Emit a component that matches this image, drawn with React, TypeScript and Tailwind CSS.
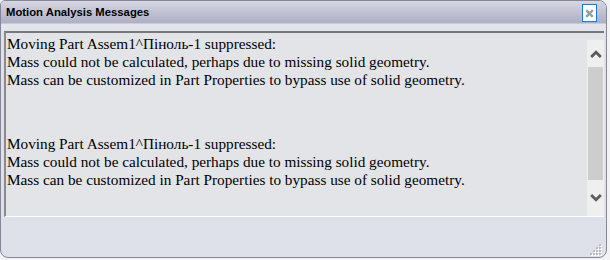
import React from "react";

const messages = [
  "Moving Part Assem1^Пiноль-1 suppressed:",
  "Mass could not be calculated, perhaps due to missing solid geometry.",
  "Mass can be customized in Part Properties to bypass use of solid geometry.",
];

function Chevron({ up }: { up?: boolean }) {
  return (
    <svg width="12" height="8" viewBox="0 0 12 8" className="block">
      <path
        d={up ? "M1.2 7 L6 2.2 L10.8 7" : "M1.2 1 L6 5.8 L10.8 1"}
        fill="none"
        stroke="#5c5c5c"
        strokeWidth="2.8"
      />
    </svg>
  );
}

function Grip() {
  const dots = [
    [10, 0],
    [7, 3],
    [10, 3],
    [4, 6],
    [7, 6],
    [10, 6],
    [1, 9],
    [4, 9],
    [7, 9],
    [10, 9],
  ];
  return (
    <svg width="13" height="12" viewBox="0 0 13 12" className="block">
      {dots.map(([x, y], i) => (
        <g key={i}>
          <rect x={x + 1} y={y + 1} width="2" height="2" fill="#ffffff" />
          <rect x={x} y={y} width="2" height="2" fill="#b7b9c8" />
        </g>
      ))}
    </svg>
  );
}

export default function App() {
  return (
    <div className="w-[610px] h-[260px] bg-[#f3f3f5]">
      <div className="w-[607px] h-[258px] rounded-tl-[5px] rounded-tr-[8px] rounded-b-[8px] border border-[#858799] bg-[#dfe1ea] flex flex-col overflow-hidden">
        <div className="h-[22px] shrink-0 bg-gradient-to-b from-[#d6d7e1] to-[#adafc4] flex items-center justify-between pl-[5px] pr-[9px]">
          <span className="font-['Liberation_Sans',Arial,sans-serif] font-bold text-[11.3px] text-black leading-none pt-[2px]">
            Motion Analysis Messages
          </span>
          <div className="w-[15px] h-[18px] mt-[2px] border border-[#1b7cd8] bg-white flex items-center justify-center">
            <svg width="9" height="9" viewBox="0 0 9 9">
              <path d="M1.2 1.2 L7.8 7.8 M7.8 1.2 L1.2 7.8" stroke="#8fa2a2" strokeWidth="2.4" />
            </svg>
          </div>
        </div>
        <div className="h-[8px] shrink-0 border-t border-[#c9cad6] bg-[#e3e4ec]" />
        <div className="flex-1 flex flex-col pl-[3px] pr-[2px]">
          <div className="h-[186px] flex border-t-2 border-l-2 border-t-[#777777] border-l-[#8a8a8a] border-b border-b-white bg-[#e3e4e8]">
            <div className="flex-1 pl-[1px] pt-[2px] font-['Liberation_Serif','Times_New_Roman',serif] text-[15.25px] leading-[18px] text-black">
              <div>
                {messages.map((m) => (
                  <div key={m} className="whitespace-nowrap">{m}</div>
                ))}
              </div>
              <div className="mt-[46px]">
                {messages.map((m) => (
                  <div key={m} className="whitespace-nowrap">{m}</div>
                ))}
              </div>
            </div>
            <div className="w-[17px] mt-[7px] bg-[#efefef] flex flex-col items-center">
              <div className="h-[27px] w-full flex items-center justify-center">
                <Chevron up />
              </div>
              <div className="h-[113px] w-[15px] bg-[#cdcdcd]" />
              <div className="flex-1 w-full flex items-center justify-center">
                <Chevron />
              </div>
            </div>
          </div>
          <div className="flex-1 flex items-end justify-end pb-[1px] pr-[2px]">
            <Grip />
          </div>
        </div>
      </div>
    </div>
  );
}
